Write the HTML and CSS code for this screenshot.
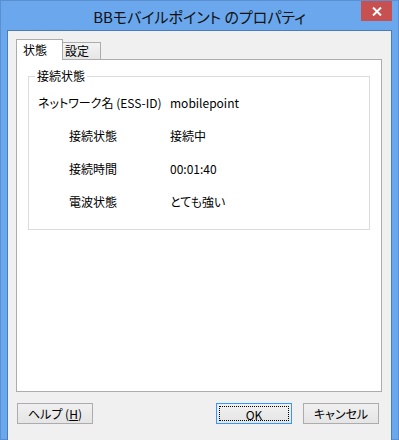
FILE: index.html
```html
<!DOCTYPE html>
<html lang="ja">
<head>
    <meta charset="UTF-8">
    <meta name="viewport" content="width=device-width, initial-scale=1.0">
    <title>BBモバイルポイント のプロパティ</title>
    <link rel="stylesheet" href="styles.css">
</head>
<body>
    <div class="window">
        <div class="title-bar">
            <span class="title">BBモバイルポイント のプロパティ</span>
            <button class="close-button" aria-label="閉じる">
                <svg width="10" height="9" viewBox="0 0 10 9">
                    <path d="M1 0.5 L9 8.5 M9 0.5 L1 8.5" stroke="#fff" stroke-width="2"/>
                </svg>
            </button>
        </div>
        <div class="client">
            <div class="tabs">
                <div class="tab active">状態</div>
                <div class="tab">設定</div>
            </div>
            <div class="page">
                <fieldset class="group">
                    <legend>接続状態</legend>
                    <div class="info-grid">
                        <span>ネットワーク名 (ESS-ID)</span>
                        <span>mobilepoint</span>
                        <span class="indent">接続状態</span>
                        <span>接続中</span>
                        <span class="indent">接続時間</span>
                        <span>00:01:40</span>
                        <span class="indent">電波状態</span>
                        <span>とても強い</span>
                    </div>
                </fieldset>
            </div>
            <div class="button-row">
                <button class="dlg-button">ヘルプ (<u>H</u>)</button>
                <span class="spacer"></span>
                <button class="dlg-button default"><span class="focus">OK</span></button>
                <button class="dlg-button">キャンセル</button>
            </div>
        </div>
    </div>
</body>
</html>
```

FILE: styles.css
```css
body {
    margin: 0;
    font-family: "Noto Sans CJK JP", "Noto Sans", sans-serif;
    font-size: 12px;
    color: #000;
    font-feature-settings: "palt";
}
.window {
    position: relative;
    width: 399px;
    height: 440px;
    box-sizing: border-box;
    border: 1px solid #5a8fd2;
    background-color: #6aa7ec;
    padding: 0 6px 6px;
}
.title-bar {
    height: 29px;
    display: flex;
    justify-content: center;
    align-items: center;
}
.title {
    font-size: 15px;
    color: #111;
    margin-top: 1px;
}
.close-button {
    position: absolute;
    top: 0;
    right: 6px;
    width: 31px;
    height: 20px;
    border: none;
    padding: 0;
    background-color: #c75050;
    display: flex;
    justify-content: center;
    align-items: center;
}
.client {
    height: 401px;
    border: 1px solid #4a7bbd;
    background-color: #f0f0f0;
    padding: 8px 0 0 8px;
    box-sizing: content-box;
    width: 375px;
    display: flex;
    flex-direction: column;
}
.tabs {
    display: flex;
    align-items: flex-end;
    height: 20px;
    position: relative;
    z-index: 1;
}
.tab {
    box-sizing: border-box;
    height: 17px;
    line-height: 16px;
    width: 38px;
    padding-left: 2px;
    border: 1px solid #acacac;
    border-left: none;
    border-bottom: none;
    background: linear-gradient(#f3f3f3, #e6e6e6);
}
.tab.active {
    height: 21px;
    width: 47px;
    padding-left: 6px;
    line-height: 19px;
    border-left: 1px solid #acacac;
    background: #fff;
    margin-bottom: -1px;
}
.page {
    box-sizing: border-box;
    width: 366px;
    height: 333px;
    border: 1px solid #acacac;
    background-color: #fff;
    padding-top: 8px;
}
.group {
    margin: 0 11px;
    padding: 2px 0 11px;
    border: 1px solid #dcdcdc;
    min-width: 0;
}
.group legend {
    margin-left: 6px;
    padding: 0 2px;
    line-height: 16px;
}
.info-grid {
    display: grid;
    grid-template-columns: 132px 1fr;
    grid-auto-rows: 33px;
    align-items: center;
    padding-left: 9px;
}
.indent {
    padding-left: 31px;
}
.button-row {
    display: flex;
    margin-top: 11px;
    padding-left: 1px;
    padding-right: 12px;
    gap: 11px;
}
.spacer {
    flex: 1;
}
.dlg-button {
    box-sizing: border-box;
    width: 76px;
    height: 21px;
    padding: 0;
    border: 1px solid #acacac;
    background: linear-gradient(#f0f0f0, #e5e5e5);
    font-family: inherit;
    font-size: 12px;
    color: #000;
    font-feature-settings: "palt";
}
.dlg-button.default {
    border-color: #3399ff;
    padding: 2px;
}
.focus {
    display: block;
    height: 100%;
    line-height: 15px;
    border: 1px dotted #000;
    box-sizing: border-box;
}
```
